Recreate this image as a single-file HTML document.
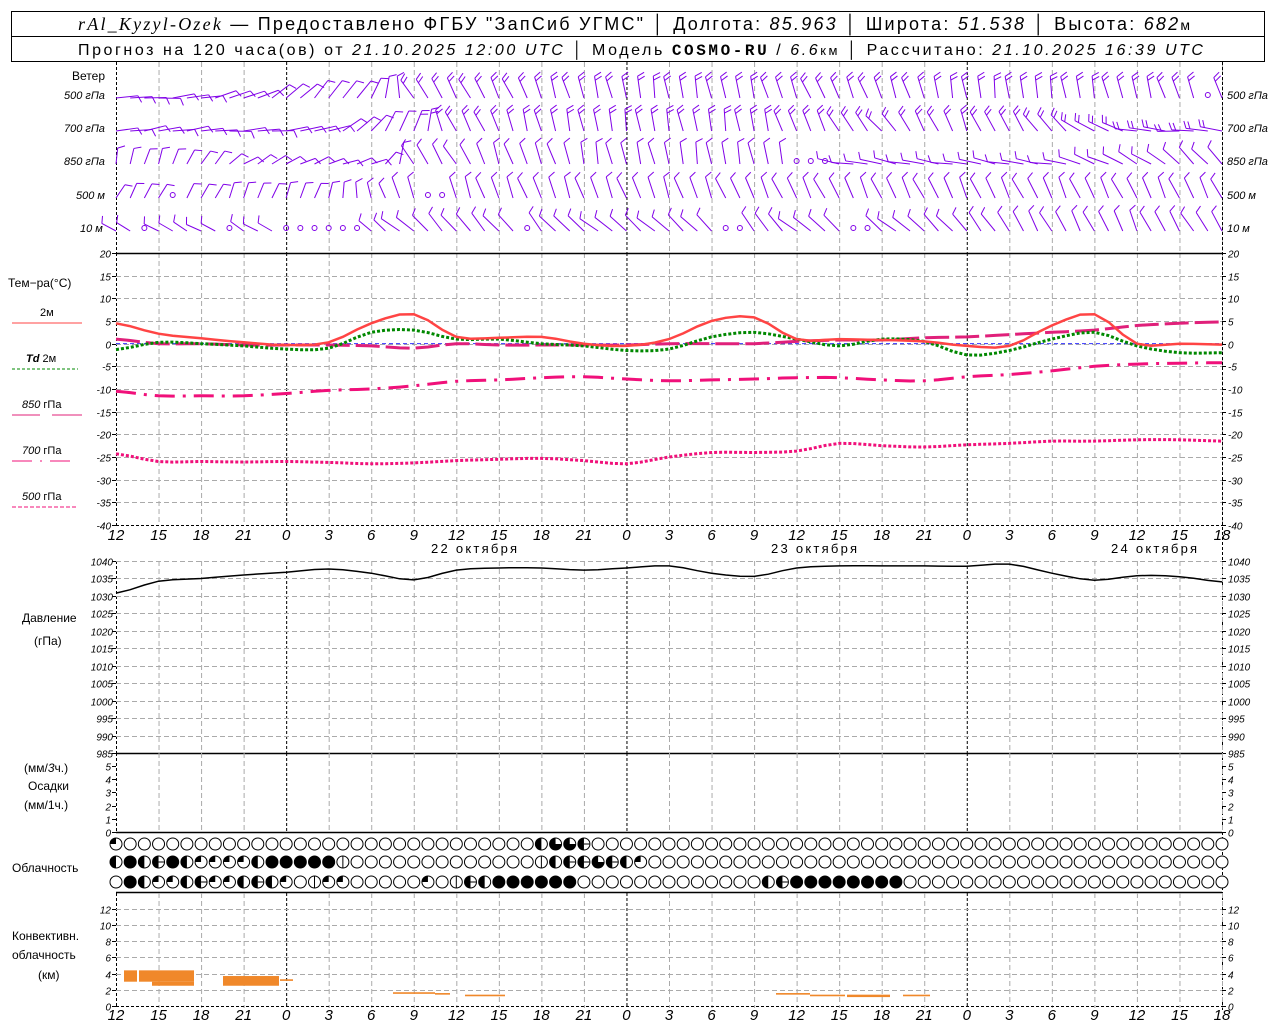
<!DOCTYPE html>
<html><head><meta charset="utf-8">
<style>
html,body{margin:0;padding:0;background:#fff;}
svg{display:block;font-family:"Liberation Sans",sans-serif;}
.n{font-style:italic;font-size:10px;}
.t{font-style:italic;font-size:15px;}
.l{font-size:12px;}
</style></head><body>
<svg id="s" width="1280" height="1024" xmlns="http://www.w3.org/2000/svg">
<rect x="11.5" y="11.5" width="1253" height="50" fill="none" stroke="#000"/>
<line x1="11" y1="36.5" x2="1265" y2="36.5" stroke="#000"/>
<text x="78" y="30" font-size="18" textLength="1112" lengthAdjust="spacing"><tspan font-family="Liberation Serif" font-style="italic">rAl_Kyzyl-Ozek</tspan> — Предоставлено ФГБУ "ЗапСиб УГМС" │ Долгота: <tspan font-style="italic">85.963</tspan> │ Широта: <tspan font-style="italic">51.538</tspan> │ Высота: <tspan font-style="italic">682</tspan><tspan font-size="14">м</tspan></text>
<text x="78" y="55" font-size="16" textLength="1125" lengthAdjust="spacing">Прогноз на 120 часа(ов) от <tspan font-style="italic">21.10.2025 12:00 UTC</tspan>  │ Модель <tspan font-family="Liberation Mono" font-weight="bold">COSMO-RU</tspan> / <tspan font-style="italic">6.6</tspan><tspan font-size="13">км</tspan> │ Рассчитано: <tspan font-style="italic">21.10.2025 16:39 UTC</tspan></text>
<g class="l">
<text x="72" y="80">Ветер</text>
<text x="8" y="287">Тем−ра(°C)</text>
<text x="40" y="316" font-size="11">2м</text>
<text x="26" y="362" font-size="11"><tspan font-style="italic" font-weight="bold">Td</tspan>  2м</text>
<text x="22" y="408" font-size="11"><tspan font-style="italic">850</tspan> гПа</text>
<text x="22" y="454" font-size="11"><tspan font-style="italic">700</tspan> гПа</text>
<text x="22" y="500" font-size="11"><tspan font-style="italic">500</tspan> гПа</text>
<text x="22" y="622">Давление</text>
<text x="34" y="645">(гПа)</text>
<text x="24" y="772">(мм/<tspan font-style="italic">3</tspan>ч.)</text>
<text x="28" y="790">Осадки</text>
<text x="24" y="809">(мм/1ч.)</text>
<text x="12" y="872">Облачность</text>
<text x="12" y="940">Конвективн.</text>
<text x="12" y="959">облачность</text>
<text x="38" y="979">(км)</text>
</g>
<g class="n">
<text x="64" y="99" font-size="11"><tspan font-style="italic">500</tspan> гПа</text>
<text x="64" y="132" font-size="11"><tspan font-style="italic">700</tspan> гПа</text>
<text x="64" y="165" font-size="11"><tspan font-style="italic">850</tspan> гПа</text>
<text x="76" y="199" font-size="11"><tspan font-style="italic">500</tspan> м</text>
<text x="80" y="232" font-size="11"><tspan font-style="italic">10</tspan>   м</text>
<text x="1227" y="99" font-size="11">500 гПа</text>
<text x="1227" y="132" font-size="11">700 гПа</text>
<text x="1227" y="165" font-size="11">850 гПа</text>
<text x="1227" y="199" font-size="11">500 м</text>
<text x="1227" y="232" font-size="11">10   м</text>
</g>
<g fill="none" stroke-width="1">
<line x1="12" y1="323" x2="82" y2="323" stroke="#f44"/>
<line x1="12" y1="369" x2="78" y2="369" stroke="#080" stroke-dasharray="3,2"/>
<line x1="12" y1="415" x2="40" y2="415" stroke="#e0207a"/><line x1="52" y1="415" x2="82" y2="415" stroke="#e0207a"/>
<line x1="12" y1="461" x2="78" y2="461" stroke="#f0107a" stroke-dasharray="20,8,2,8"/>
<line x1="12" y1="507" x2="78" y2="507" stroke="#f0107a" stroke-dasharray="4,2"/>
</g>
<text x="431" y="553" font-size="13" textLength="86" lengthAdjust="spacing">22 октября</text>
<text x="771" y="553" font-size="13" textLength="86" lengthAdjust="spacing">23 октября</text>
<text x="1111" y="553" font-size="13" textLength="86" lengthAdjust="spacing">24 октября</text>
<g id="g"></g>
<g id="txt" class="n"></g>
</svg>
<script>
var NS="http://www.w3.org/2000/svg",g=document.getElementById('g'),tg=document.getElementById('txt');
var X0=116,X1=1222,DX=(X1-X0)/26;
function el(n,a,p){var e=document.createElementNS(NS,n);for(var k in a)e.setAttribute(k,a[k]);(p||g).appendChild(e);return e;}
function ln(x1,y1,x2,y2,c,w,d){var a={x1:x1,y1:y1,x2:x2,y2:y2,stroke:c,'stroke-width':w||1};if(d)a['stroke-dasharray']=d;return el('line',a);}
function tx(x,y,s,anchor,cls){var e=el('text',{x:x,y:y,'text-anchor':anchor||'start'},tg);if(cls)e.setAttribute('class',cls);e.textContent=s;}
var hrs=[12,15,18,21,0,3,6,9,12,15,18,21,0,3,6,9,12,15,18,21,0,3,6,9,12,15,18];
function vgrid(y1,y2){for(var i=0;i<=26;i++){var x=X0+i*DX+0.5;if(i==0||hrs[i]==0)ln(x,y1,x,y2,'#000',1,'3,2');else ln(x,y1,x,y2,'#aaa',1,'5,3');}}
vgrid(62,253);
vgrid(253,525);
for(var v=20;v>=-40;v-=5){var y=253+(20-v)*272/60;y=Math.round(y)+0.5;if(v!=20&&v!=-40)ln(X0,y,X1,y,'#aaa',1,'5,3');ln(X0-4,y,X0,y,'#000');ln(X1,y,X1+4,y,'#000');tx(X0-5,y+4,v,'end');tx(X1+6,y+4,v);}
ln(X0,253.5,X1,253.5,'#000',1.5);ln(X0,525.5,X1,525.5,'#000',1,'3,2');
ln(X1+0.5,62,X1+0.5,1010,'#000',1,'3,2');
for(var i=0;i<=26;i++){var x=X0+i*DX;tx(x,540,hrs[i],'middle','t');tx(x,1020,hrs[i],'middle','t');}
vgrid(561,753);
for(var v=1040;v>=985;v-=5){var y=Math.round(561+(1040-v)*192/55)+0.5;if(v!=985)ln(X0,y,X1,y,'#aaa',1,'5,3');ln(X0-4,y,X0,y,'#000');ln(X1,y,X1+4,y,'#000');tx(X0-3,y+4,v,'end');tx(X1+6,y+4,v);}
ln(X0,753.5,X1,753.5,'#000',1.5);
vgrid(753,832);
for(var v=0;v<=5;v++){var y=Math.round(832-v*13.2)+0.5;ln(X0-4,y,X0,y,'#000');ln(X1,y,X1+4,y,'#000');tx(X0-5,y+4,v,'end');tx(X1+6,y+4,v);}
ln(X0,832.5,X1,832.5,'#000',1.5);
ln(X0,892.5,X1,892.5,'#000',1.5);
vgrid(893,1008);
for(var v=0;v<=12;v+=2){var y=Math.round(1006-v*8.1)+0.5;if(v>0)ln(X0,y,X1,y,'#aaa',1,'5,3');ln(X0-4,y,X0,y,'#000');ln(X1,y,X1+4,y,'#000');tx(X0-5,y+4,v,'end');tx(X1+6,y+4,v);}
ln(X0,1006.5,X1,1006.5,'#000',1,'3,2');
function ty(v){return 253+(20-v)*272/60;}
function smooth(arr){var out=[];for(var i=0;i<arr.length-1;i++){for(var s=0;s<3;s++){var t=s/3;var p0=arr[Math.max(0,i-1)],p1=arr[i],p2=arr[i+1],p3=arr[Math.min(arr.length-1,i+2)];var v=0.5*((2*p1)+(-p0+p2)*t+(2*p0-5*p1+4*p2-p3)*t*t+(-p0+3*p1-3*p2+p3)*t*t*t);out.push(v);}}out.push(arr[arr.length-1]);return out;}
function poly(arr,fy,c,w,d){var a2=smooth(arr),st=DX/3;var p=a2.map(function(v,i){return (X0+i*st).toFixed(1)+','+fy(v).toFixed(1)}).join(' ');var a={points:p,fill:'none',stroke:c,'stroke-width':w};if(d)a['stroke-dasharray']=d;el('polyline',a);}
ln(X0,ty(0),X1,ty(0),'#33f',1,'4,3');
var T=[4.5,2.2,1.2,0.3,-0.3,0.3,4.5,6.5,1.5,1.3,1.5,0,-0.5,1,5,5.8,1,1,0.8,0.5,-0.5,-0.5,4,6.5,0,0,-0.2];
var TD=[-1.3,0.3,0,-0.5,-1.2,-1,2.5,3,1,1,0,-0.5,-1.5,-1.2,1.5,2.5,1,-0.5,1,0.5,-2.5,-1.5,1,2.5,-0.5,-2,-2];
var P850=[1,0,0,-0.3,-0.3,-0.3,-0.5,-1,0,-0.3,-0.3,-0.3,-0.3,0,0,0,0.5,0.8,0.8,1.3,1.5,2,2.5,3,4,4.5,4.8];
var P700=[-10.5,-11.5,-11.5,-11.5,-11,-10.3,-10,-9.3,-8.3,-8,-7.5,-7.3,-7.8,-8.2,-8,-7.8,-7.5,-7.5,-8,-8.2,-7.3,-6.8,-6,-5,-4.5,-4.3,-4.2];
var P500=[-24.3,-26,-26,-26.1,-26,-26.2,-26.5,-26.3,-25.8,-25.5,-25.3,-25.8,-26.5,-25,-24,-24,-23.7,-22,-22.5,-22.8,-22.3,-22,-21.5,-21.5,-21.2,-21.2,-21.5];
poly(P500,ty,'#f0107a',3,'3,2');
poly(P700,ty,'#f0107a',3,'20,8,3,8');
poly(P850,ty,'#e0207a',3,'24,6');
poly(TD,ty,'#080',3,'3,2');
poly(T,ty,'#f44',2.5);
var PR=[1030.8,1034.2,1035,1036,1036.8,1037.7,1036.5,1034.6,1037.4,1038,1038,1037.4,1038,1038.6,1036.5,1035.6,1038,1038.6,1038.6,1038.6,1038.5,1039.1,1036.5,1034.5,1035.8,1035.5,1034];
poly(PR,function(v){return 561+(1040-v)*192/55},'#000',1.5);
function cy(v){return 1006-v*8.1;}
[[124,137,3,4.4],[139,194,3,4.4],[152,194,2.5,3],[223,279,2.5,3.7],[280,293,3.1,3.3],[393,435,1.5,1.7],[435,450,1.4,1.6],[465,505,1.2,1.4],[776,810,1.4,1.6],[810,845,1.2,1.4],[847,890,1.1,1.4],[903,930,1.2,1.4]].forEach(function(b){el('rect',{x:b[0],y:cy(b[3]),width:b[1]-b[0],height:cy(b[2])-cy(b[3]),fill:'#f0882a'});});
var CX=(X1-X0)/78;
function rowCodes(spec){var a=[];for(var i=0;i<79;i++)a.push('e');for(var k in spec)a[k]=spec[k];return a;}
var R1=rowCodes({0:'q',30:'h',31:'t',32:'t',33:'x'});
var R2=rowCodes({0:'h',1:'f',2:'h',3:'x',4:'f',5:'h',6:'q',7:'q',8:'q',9:'q',10:'h',11:'f',12:'f',13:'f',14:'f',15:'f',16:'v',30:'v',31:'h',32:'x',33:'x',34:'t',35:'x',36:'h',37:'q'});
var r3={1:'f',2:'h',3:'q',4:'q',5:'h',6:'x',7:'q',8:'q',9:'h',10:'x',11:'h',12:'q',14:'v',15:'q',16:'q',22:'q',24:'v',25:'x',26:'h',46:'h',47:'x'};
for(var i=27;i<=32;i++)r3[i]='f';for(var i=48;i<=55;i++)r3[i]='f';
var R3=rowCodes(r3);
function cloud(x,y,c){var r=6;
 if(c=='f'){el('circle',{cx:x,cy:y,r:r,fill:'#000',stroke:'#000'});return;}
 el('circle',{cx:x,cy:y,r:r,fill:'#fff',stroke:'#000','stroke-width':1});
 if(c=='q')el('path',{d:'M'+x+','+y+' L'+x+','+(y-r)+' A'+r+','+r+' 0 0,0 '+(x-r)+','+y+' Z',fill:'#000'});
 if(c=='h'||c=='x')el('path',{d:'M'+x+','+(y-r)+' A'+r+','+r+' 0 0,0 '+x+','+(y+r)+' Z',fill:'#000'});
 if(c=='x')ln(x,y,x+r,y,'#000');
 if(c=='t')el('path',{d:'M'+x+','+y+' L'+x+','+(y-r)+' A'+r+','+r+' 0 1,0 '+(x+r)+','+y+' Z',fill:'#000'});
 if(c=='v')ln(x,y-r,x,y+r,'#000');
}
[[R1,844],[R2,862],[R3,882]].forEach(function(rw){for(var i=0;i<79;i++)cloud(X0+i*CX,rw[1],rw[0][i]);});
var ang=[
[90,85,80,70,50,40,30,-30,-30,-25,-20,-15,-10,-10,-10,-15,-20,-25,-20,-15,-10,-5,-10,-10,-15,-20,-20],
[80,80,85,85,85,70,40,20,-30,-20,-15,-10,-10,-10,-10,-10,-20,-30,-40,-30,-20,-30,-40,-60,-80,-85,-85],
[10,20,30,60,60,70,75,-30,-30,-20,-20,-10,-15,-10,-10,-10,-10,-80,-80,-80,-80,-80,-80,-70,-60,-50,-40],
[30,30,30,20,20,20,-20,-20,-20,-20,-20,-20,-20,-20,-20,-25,-25,-25,-25,-25,-25,-25,-25,-25,-25,-25,-25],
[-60,-60,-60,-60,-60,-60,-50,-50,-40,-40,-40,-50,-50,-50,-40,-30,-50,-50,-50,-50,-40,-30,-30,-25,-25,-30,-30]];
var rowY=[98,131,164,198,231];
var calms={'0,77':1,'3,4':1,'4,2':1,'4,8':1,'4,12':1,'4,13':1,'4,14':1,'4,15':1,'4,16':1,'4,17':1,'4,29':1,'3,22':1,'3,23':1,'2,48':1,'2,49':1,'2,50':1,'4,43':1,'4,44':1,'4,52':1,'4,53':1};
for(var r=0;r<5;r++)for(var i=0;i<79;i++){var x=X0+i*CX,y=rowY[r];
 if(calms[r+','+i]){el('circle',{cx:x,cy:y-3,r:2.5,fill:'none',stroke:'#8000e8'});continue;}
 var f=i/3,k=Math.min(25,Math.floor(f)),t=f-k,a=ang[r][k]*(1-t)+ang[r][k+1]*t;
 a=a+((i*37+r*11)%7-3)*2;var rad=a*Math.PI/180,L=(r>=2&&i<20)?16:22;
 var ex=x+L*Math.sin(rad),ey=y-L*Math.cos(rad);
 ln(x,y,ex,ey,'#8000e8',1);
 var px=Math.cos(rad),py=Math.sin(rad),nb=(r<2&&i>20)?2:1;
 for(var b=0;b<nb;b++){var bx=ex-(b*4)*Math.sin(rad),by=ey+(b*4)*Math.cos(rad);
  ln(bx,by,bx+7*px+3*Math.sin(rad),by+7*py-3*Math.cos(rad),'#8000e8',1);}
}
</script>
</body></html>
